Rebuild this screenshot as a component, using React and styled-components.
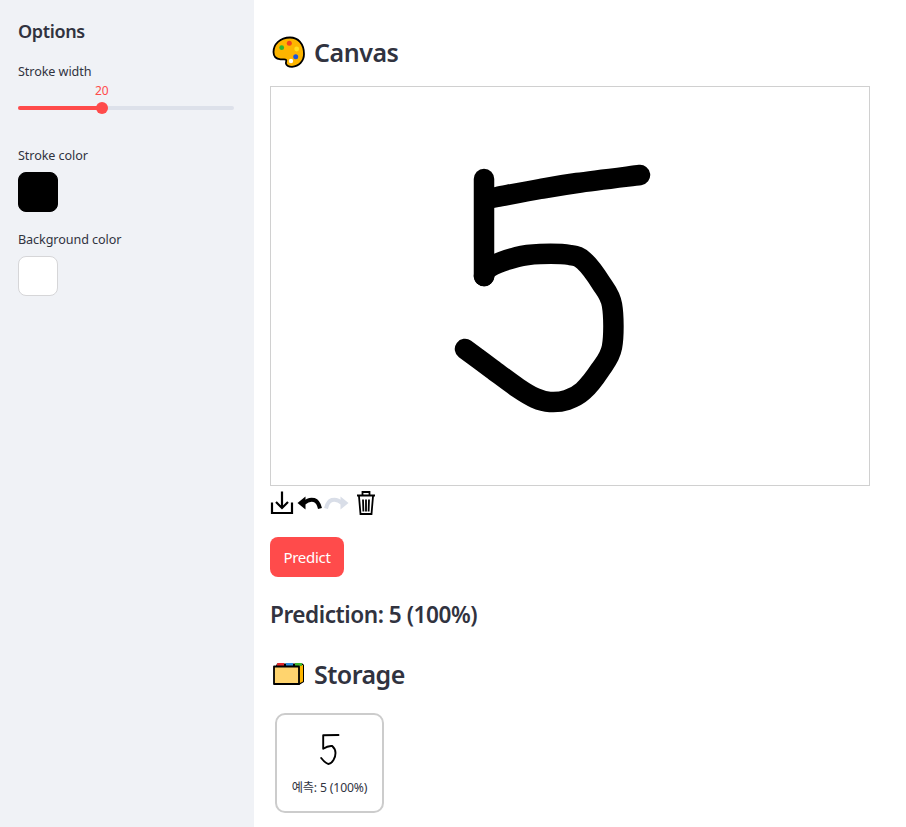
import React from "react";
import styled, { createGlobalStyle } from "styled-components";

const Global = createGlobalStyle`
  html, body { margin: 0; padding: 0; background: #fff; height: 100%; overflow: hidden; }
  #root { height: 100%; }
  * { box-sizing: border-box; }
`;
const Page = styled.div`
  display: flex; height: 827px; width: 906px;
  font-family: "Noto Sans", "Noto Sans CJK KR", sans-serif; color: #31333f;
`;
const Sidebar = styled.aside`
  width: 254px; flex: none; background: #f0f2f6; padding: 19px 20px 0 18px;
  display: flex; flex-direction: column;
`;
const SideTitle = styled.h2`
  margin: 0; font-size: 18px; line-height: 25px; font-weight: 600; letter-spacing: -0.35px;
`;
const FieldLabel = styled.div`
  font-size: 12.6px; line-height: 18px; letter-spacing: -0.08px; color: #31333f; height: 18px;
`;
const SliderField = styled.div`
  margin-top: 19px; height: 71px;
`;
const SliderBox = styled.div`
  position: relative; height: 32px; margin-top: 2px;
`;
const SliderValue = styled.span`
  position: absolute; left: 77px; top: 0; font-size: 12px; line-height: 16px; color: #ff4b4b; letter-spacing: -0.2px;
`;
const Track = styled.div`
  position: absolute; left: 0; right: 0; top: 23px; height: 4px; border-radius: 2px; background: #dde1ea;
`;
const TrackFill = styled.div`
  height: 100%; border-radius: 2px; background: #ff4b4b;
`;
const Thumb = styled.div`
  position: absolute; top: 19px; left: 78px; width: 12px; height: 12px; border-radius: 50%; background: #ff4b4b;
`;
const ColorField = styled.div`
  margin-top: ${p => p.$gap}px; display: flex; flex-direction: column; gap: 7px;
`;
const Swatch = styled.div`
  width: 40px; height: 40px; border-radius: 8px; background: ${p => p.$color};
  border: 1px solid ${p => p.$border};
`;
const Main = styled.main`
  flex: 1; min-width: 0; padding: 32px 0 0 16px; display: flex; flex-direction: column; align-items: flex-start;
`;
const Heading = styled.h3`
  margin: 0; display: flex; align-items: center; gap: 8px; height: 40px; padding-left: 2px;
  font-size: 25px; line-height: 40px; font-weight: 600; letter-spacing: -0.45px; color: #31333f;
`;
const Canvas = styled.div`
  margin-top: 14px; width: 600px; height: 400px; border: 1px solid #d0d0d0; background: #fff;
`;
const CanvasArt = styled.svg`
  display: block; width: 598px; height: 398px;
`;
const Toolbar = styled.div`
  display: flex; align-items: center; height: 25px; margin-top: 4px; gap: 2px;
`;
const ToolIcon = styled.svg`
  display: block; width: ${p => p.$w}px; height: 26px; flex: none;
`;
const PredictButton = styled.button`
  margin-top: 22px; height: 40px; width: 74px; padding: 0; border: none; border-radius: 8px;
  background: #ff4b4b; color: #fff; font: 400 15px/38px "Noto Sans", sans-serif; letter-spacing: -0.3px;
`;
const Prediction = styled.div`
  margin-top: 21px; height: 33px; font-size: 22.6px; line-height: 33px; font-weight: 600; letter-spacing: -0.46px; color: #31333f;
`;
const StorageHeading = styled(Heading)`
  margin-top: 23px;
  letter-spacing: -0.55px;
`;
const Thumbs = styled.div`
  margin-top: 19px; padding-left: 5px; display: flex;
`;
const ThumbCard = styled.div`
  width: 109px; height: 100px; border: 2px solid #cccccc; border-radius: 10px; background: #fff;
  display: flex; flex-direction: column; align-items: center;
`;
const ThumbArt = styled.svg`
  display: block; width: 40px; height: 44px; margin-top: 14px; flex: none;
`;
const ThumbCaption = styled.div`
  margin-top: 7px; font-size: 12.2px; line-height: 16px; letter-spacing: -0.15px; color: #31333f; white-space: nowrap;
`;

// Catmull-Rom through the sampled pen points, so the stroke reads as one smooth line.
const smooth = pts => {
  let d = `M${pts[0][0]} ${pts[0][1]}`;
  for (let i = 0; i < pts.length - 1; i++) {
    const p0 = pts[i - 1] || pts[i];
    const p1 = pts[i];
    const p2 = pts[i + 1];
    const p3 = pts[i + 2] || p2;
    const c1 = [p1[0] + (p2[0] - p0[0]) / 6, p1[1] + (p2[1] - p0[1]) / 6];
    const c2 = [p2[0] - (p3[0] - p1[0]) / 6, p2[1] - (p3[1] - p1[1]) / 6];
    d += `C${c1[0]} ${c1[1]} ${c2[0]} ${c2[1]} ${p2[0]} ${p2[1]}`;
  }
  return d;
};
const topStroke = [[486, 199], [497, 197], [540, 189], [577, 183], [640, 175]];
const bowlStroke = [[484, 276], [490, 267], [517, 257], [540, 254], [570, 255], [584, 261], [601, 283], [612, 305], [612, 347], [600, 370], [583, 391], [567, 400], [550, 402], [535, 398], [518, 388], [492, 369], [465, 349]];

const Palette = () => (
  <svg width="34" height="34" viewBox="0 0 34 34">
    <path d="M18 2.500C8 2.500 1.500 9.500 1.500 17c0 5 3.500 7 7 7.300 3 .4 4.500-.5 5.500.5 1 1.300-.5 2.300 0 4 .7 2.300 3 3 6 3 7-.3 12-5.800 12-12.800C32 8.500 26 2.500 18 2.500z" fill="#fdb500" stroke="#000" strokeWidth="1.800" strokeLinejoin="round"/>
    <circle cx="9.700" cy="12.700" r="2.400" fill="#2fb52f"/>
    <circle cx="17.300" cy="8.300" r="2.500" fill="#f0451f"/>
    <circle cx="24.700" cy="14" r="2.400" fill="#ffdf1f"/>
    <circle cx="23.700" cy="21.700" r="2.500" fill="#1f55d8"/>
    <circle cx="19" cy="26" r="2.200" fill="#fff"/>
  </svg>
);
const Folder = () => (
  <svg width="34" height="34" viewBox="0 0 34 34">
    <path d="M4 9L5 6.500H30.500L32 8V25L27 28z" fill="#000"/>
    <path d="M27 8H31V24.500L27 26.500z" fill="#fdb500"/>
    <path d="M5 9V6.800L6 6H12V9z" fill="#e5262a"/>
    <path d="M14 9V6H21V9z" fill="#2e8de0"/>
    <path d="M23 9V6H30V9z" fill="#3fb52f"/>
    <path d="M2 9.500H27V27H2z" fill="#ffd46e" stroke="#000" strokeWidth="1.800" strokeLinejoin="round"/>
  </svg>
);
const ArrowShape = ({ color }) => (
  <g fill={color}>
    <path d="M1.500 13L9.500 6.500V19.500z" />
    <path d="M8 13Q13 8.600 18 10Q22.500 11.500 24 18.500" fill="none" stroke={color} strokeWidth="4" />
  </g>
);

export default function App() {
  return (
    <Page>
      <Global />
      <Sidebar>
        <SideTitle>Options</SideTitle>
        <SliderField>
          <FieldLabel>Stroke width</FieldLabel>
          <SliderBox>
            <SliderValue>20</SliderValue>
            <Track><TrackFill style={{ width: `${(84 / 216) * 100}%` }} /></Track>
            <Thumb />
          </SliderBox>
        </SliderField>
        <ColorField $gap={13}>
          <FieldLabel>Stroke color</FieldLabel>
          <Swatch $color="#000" $border="#000" />
        </ColorField>
        <ColorField $gap={19}>
          <FieldLabel>Background color</FieldLabel>
          <Swatch $color="#fff" $border="#d6d6d8" />
        </ColorField>
      </Sidebar>
      <Main>
        <Heading><Palette />Canvas</Heading>
        <Canvas>
          <CanvasArt viewBox="271 87 598 398">
            <g fill="none" stroke="#000" strokeWidth="20.500" strokeLinecap="round" strokeLinejoin="round">
              <path d="M484 179V276" />
              <path d={smooth(topStroke)} />
              <path d={smooth(bowlStroke)} />
            </g>
          </CanvasArt>
        </Canvas>
        <Toolbar>
          <ToolIcon $w={24} viewBox="0 0 24 26">
            <path d="M2 12.500v10.500h20V12.500M12 1.500v16M6 12l6 6 6-6" fill="none" stroke="#000" strokeWidth="2.200"/>
          </ToolIcon>
          <ToolIcon $w={26} viewBox="0 0 26 26">
            <ArrowShape color="#000" />
          </ToolIcon>
          <ToolIcon $w={26} viewBox="0 0 26 26">
            <g transform="matrix(-1 0 0 1 26 0)"><ArrowShape color="#d9dee8" /></g>
          </ToolIcon>
          <ToolIcon $w={24} viewBox="0 0 24 26">
            <path d="M5 5.500h18M10.500 5V2h7v3M7 6.500l1.500 17.500h11L21 6.500M11 9.500l.4 12M14 9.500v12M17 9.500l-.4 12" fill="none" stroke="#000" strokeWidth="1.800"/>
          </ToolIcon>
        </Toolbar>
        <PredictButton>Predict</PredictButton>
        <Prediction>Prediction: 5 (100%)</Prediction>
        <StorageHeading><Folder />Storage</StorageHeading>
        <Thumbs>
          <ThumbCard>
            <ThumbArt viewBox="0 0 40 44">
              <path d="M13.200 6.300L28.500 6M13.200 6.300V19.700Q18 16.500 22.200 17Q25.500 20 25.500 24Q25.500 28 23.500 31Q21 35 18.500 35Q15 34 11.200 29" fill="none" stroke="#000" strokeWidth="1.900" strokeLinecap="round" strokeLinejoin="round"/>
            </ThumbArt>
            <ThumbCaption>예측: 5 (100%)</ThumbCaption>
          </ThumbCard>
        </Thumbs>
      </Main>
    </Page>
  );
}
